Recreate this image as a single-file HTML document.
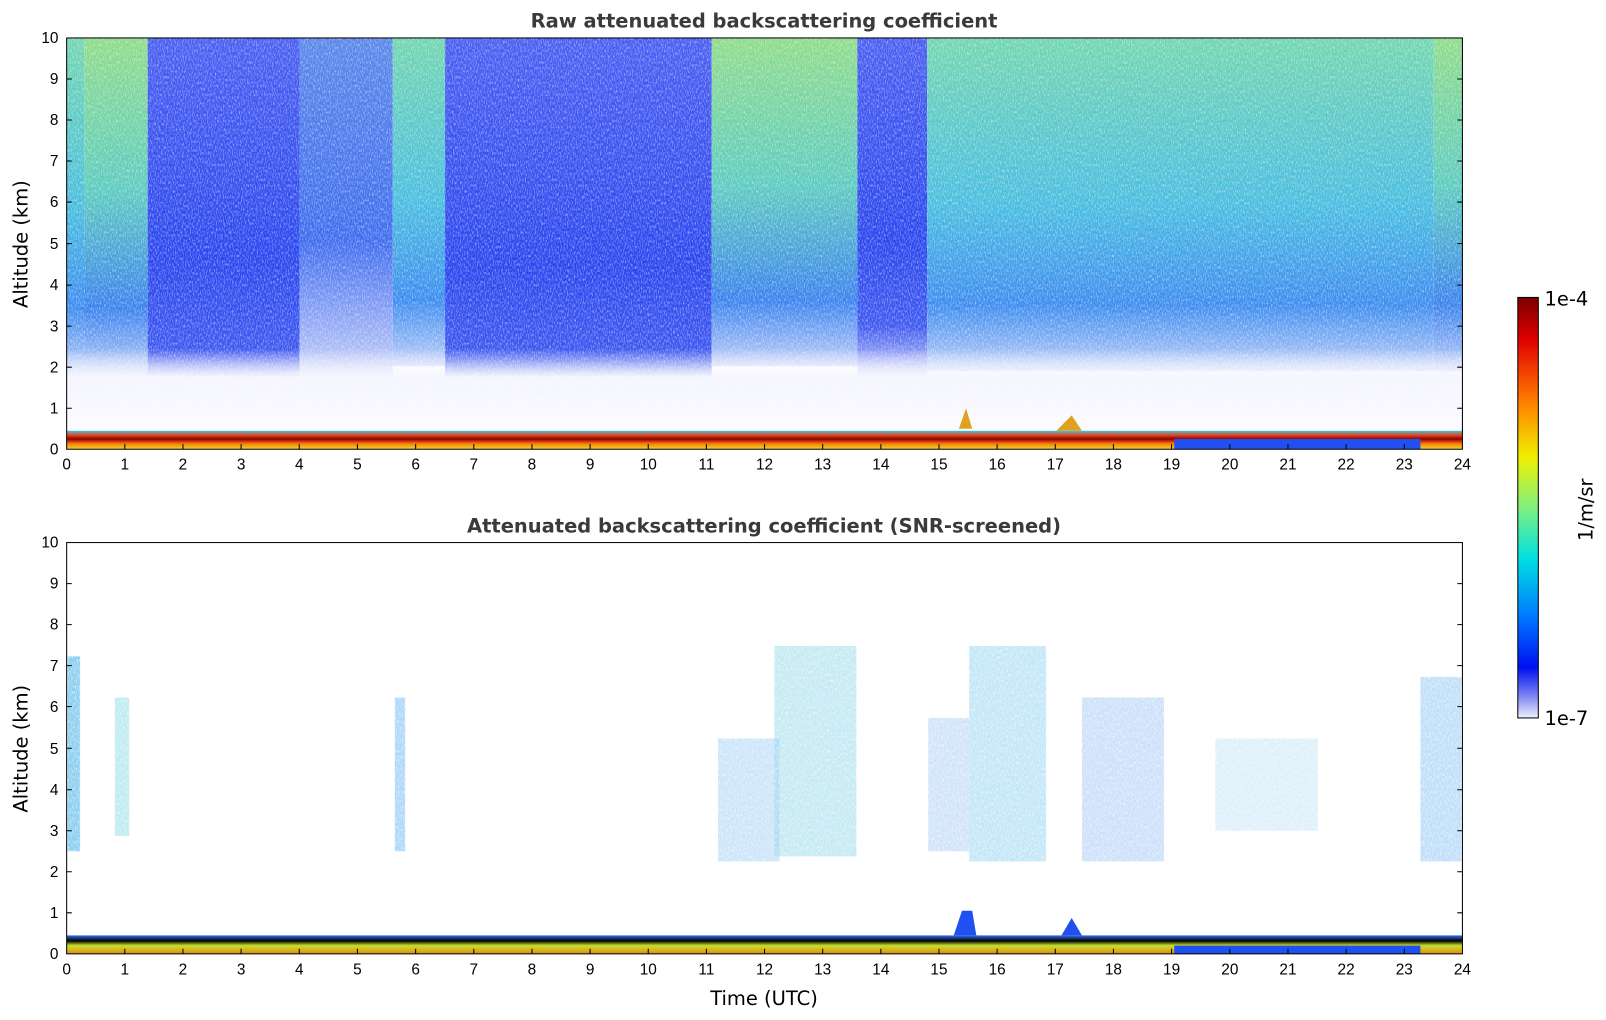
<!DOCTYPE html>
<html><head><meta charset="utf-8">
<style>
html,body{margin:0;padding:0;background:#fff;}
body{width:1606px;height:1020px;position:relative;overflow:hidden;font-family:"Liberation Sans","DejaVu Sans",sans-serif;}
</style></head>
<body>
<svg width="1606" height="1020" viewBox="0 0 1566 994.5" preserveAspectRatio="none" xmlns="http://www.w3.org/2000/svg" style="position:absolute;left:0;top:0">
<defs>
 <filter id="nz" x="0" y="0" width="100%" height="100%">
  <feTurbulence type="fractalNoise" baseFrequency="0.9 0.35" numOctaves="2" seed="3"/>
  <feColorMatrix type="matrix" values="0 0 0 0 1  0 0 0 0 1  0 0 0 0 1  0 0 0 -2.2 1.25"/>
 </filter>
 <linearGradient id="gBlue" x1="0" y1="0" x2="0" y2="1">
  <stop offset="0" stop-color="#4a5ff2"/><stop offset="0.6" stop-color="#2a46ee"/><stop offset="0.85" stop-color="#3e58f0"/><stop offset="1" stop-color="#c8cffa"/>
 </linearGradient>
 <linearGradient id="gCyan" x1="0" y1="0" x2="0" y2="1">
  <stop offset="0" stop-color="#72d6b0"/><stop offset="0.5" stop-color="#48bde0"/><stop offset="0.8" stop-color="#3c8cf0"/><stop offset="1" stop-color="#c0cef8"/>
 </linearGradient>
 <linearGradient id="gGreen" x1="0" y1="0" x2="0" y2="1">
  <stop offset="0" stop-color="#8fdc8a"/><stop offset="0.45" stop-color="#5ccbc0"/><stop offset="0.8" stop-color="#3a82ee"/><stop offset="1" stop-color="#c0cef8"/>
 </linearGradient>
 <linearGradient id="gMix" x1="0" y1="0" x2="0" y2="1">
  <stop offset="0" stop-color="#5a88ea"/><stop offset="0.6" stop-color="#3f6cee"/><stop offset="1" stop-color="#c8d0fa"/>
 </linearGradient>
 <linearGradient id="gLow" x1="0" y1="0" x2="0" y2="1">
  <stop offset="0" stop-color="#ffffff" stop-opacity="0"/><stop offset="0.35" stop-color="#f4f5fe"/><stop offset="1" stop-color="#fbfbff"/>
 </linearGradient>
 <linearGradient id="gBase" x1="0" y1="0" x2="0" y2="1">
  <stop offset="0" stop-color="#38c8e0"/><stop offset="0.25" stop-color="#e8401a"/><stop offset="0.45" stop-color="#8a0000"/><stop offset="0.7" stop-color="#ff7a10"/><stop offset="1" stop-color="#e8e020"/>
 </linearGradient>
 <linearGradient id="gBase2" x1="0" y1="0" x2="0" y2="1">
  <stop offset="0" stop-color="#3070f0"/><stop offset="0.3" stop-color="#000"/><stop offset="0.55" stop-color="#c8e030"/><stop offset="1" stop-color="#e09010"/>
 </linearGradient>
 <linearGradient id="cbar" x1="0" y1="0" x2="0" y2="1">
  <stop offset="0" stop-color="#7a0000"/><stop offset="0.1" stop-color="#e00000"/><stop offset="0.25" stop-color="#ff8000"/><stop offset="0.38" stop-color="#f0f000"/><stop offset="0.5" stop-color="#80f080"/><stop offset="0.62" stop-color="#00e0e0"/><stop offset="0.75" stop-color="#0080ff"/><stop offset="0.88" stop-color="#0010f0"/><stop offset="0.95" stop-color="#8088f0"/><stop offset="1" stop-color="#eef0ff"/>
 </linearGradient>
 <clipPath id="c1"><rect x="65" y="37" width="1361" height="401"/></clipPath>
 <clipPath id="c2"><rect x="65" y="529" width="1361" height="401"/></clipPath>
</defs>

<!-- TOP PLOT -->
<g clip-path="url(#c1)">
 <rect x="65" y="37" width="1361" height="401" fill="#fff"/>
 <g>
  <rect x="65" y="37" width="17" height="330" fill="url(#gCyan)"/>
  <rect x="82" y="37" width="62" height="330" fill="url(#gGreen)"/>
  <rect x="144" y="37" width="148" height="360" fill="url(#gBlue)"/>
  <rect x="292" y="37" width="91" height="330" fill="url(#gMix)"/>
  <rect x="383" y="37" width="51" height="320" fill="url(#gCyan)"/>
  <rect x="434" y="37" width="260" height="370" fill="url(#gBlue)"/>
  <rect x="694" y="37" width="142" height="320" fill="url(#gGreen)"/>
  <rect x="836" y="37" width="68" height="330" fill="url(#gBlue)"/>
  <rect x="904" y="37" width="494" height="325" fill="url(#gCyan)"/>
  <rect x="1398" y="37" width="28" height="325" fill="url(#gGreen)"/>
 </g>
 <rect x="65" y="340" width="1361" height="80" fill="url(#gLow)"/>
 <rect x="65" y="37" width="1361" height="401" filter="url(#nz)" opacity="0.55"/>
 <rect x="65" y="420" width="1361" height="18" fill="url(#gBase)"/>
 <rect x="1145" y="428" width="240" height="10" fill="#2050f0"/>
 <path d="M1030 420 L1045 405 L1055 420 Z M935 418 L942 398 L948 418Z" fill="#e0a020"/>
</g>
<rect x="65" y="37" width="1361" height="401" fill="none" stroke="#000" stroke-width="1"/>

<!-- BOTTOM PLOT -->
<g clip-path="url(#c2)">
 <g opacity="0.6">
  <rect x="66" y="640" width="12" height="190" fill="#40b0e8"/>
  <rect x="112" y="680" width="14" height="135" fill="#50c8d8" opacity="0.6"/>
  <rect x="385" y="680" width="10" height="150" fill="#40a0f0" opacity="0.7"/>
  <rect x="700" y="720" width="60" height="120" fill="#4aa0f0" opacity="0.45"/>
  <rect x="755" y="630" width="80" height="205" fill="#50c0e0" opacity="0.55"/>
  <rect x="905" y="700" width="40" height="130" fill="#4090f0" opacity="0.4"/>
  <rect x="945" y="630" width="75" height="210" fill="#48b8e8" opacity="0.55"/>
  <rect x="1055" y="680" width="80" height="160" fill="#4890f0" opacity="0.45"/>
  <rect x="1185" y="720" width="100" height="90" fill="#50b0e8" opacity="0.3"/>
  <rect x="1385" y="660" width="40" height="180" fill="#40a0f0" opacity="0.55"/>
 </g>
 <rect x="65" y="529" width="1361" height="401" fill="#fff" filter="url(#nz)" opacity="0.75"/>
 <rect x="65" y="912" width="1361" height="18" fill="url(#gBase2)"/>
 <path d="M930 912 L938 888 L948 888 L952 912 Z M1035 912 L1045 895 L1055 912Z" fill="#2050f0"/>
 <rect x="1145" y="922" width="240" height="8" fill="#2050f0"/>
</g>
<rect x="65" y="529" width="1361" height="401" fill="none" stroke="#000" stroke-width="1"/>

<!-- Colorbar -->
<rect x="1480" y="290" width="20" height="410" fill="url(#cbar)" stroke="#000" stroke-width="1"/>

<g font-family="Liberation Sans, DejaVu Sans, sans-serif" font-size="15" text-anchor="middle">
 <text x="65" y="458">0</text><text x="121.7" y="458">1</text><text x="178.4" y="458">2</text><text x="235.1" y="458">3</text><text x="291.8" y="458">4</text><text x="348.5" y="458">5</text><text x="405.3" y="458">6</text><text x="462" y="458">7</text><text x="518.7" y="458">8</text><text x="575.4" y="458">9</text><text x="632.1" y="458">10</text><text x="688.8" y="458">11</text><text x="745.5" y="458">12</text><text x="802.2" y="458">13</text><text x="858.9" y="458">14</text><text x="915.6" y="458">15</text><text x="972.3" y="458">16</text><text x="1029" y="458">17</text><text x="1085.7" y="458">18</text><text x="1142.4" y="458">19</text><text x="1199.2" y="458">20</text><text x="1255.9" y="458">21</text><text x="1312.6" y="458">22</text><text x="1369.3" y="458">23</text><text x="1426" y="458">24</text>
 <text x="65" y="950">0</text><text x="121.7" y="950">1</text><text x="178.4" y="950">2</text><text x="235.1" y="950">3</text><text x="291.8" y="950">4</text><text x="348.5" y="950">5</text><text x="405.3" y="950">6</text><text x="462" y="950">7</text><text x="518.7" y="950">8</text><text x="575.4" y="950">9</text><text x="632.1" y="950">10</text><text x="688.8" y="950">11</text><text x="745.5" y="950">12</text><text x="802.2" y="950">13</text><text x="858.9" y="950">14</text><text x="915.6" y="950">15</text><text x="972.3" y="950">16</text><text x="1029" y="950">17</text><text x="1085.7" y="950">18</text><text x="1142.4" y="950">19</text><text x="1199.2" y="950">20</text><text x="1255.9" y="950">21</text><text x="1312.6" y="950">22</text><text x="1369.3" y="950">23</text><text x="1426" y="950">24</text>
</g>
<g font-family="Liberation Sans, DejaVu Sans, sans-serif" font-size="15" text-anchor="end">
 <text x="57" y="443">0</text><text x="57" y="403">1</text><text x="57" y="363">2</text><text x="57" y="323">3</text><text x="57" y="283">4</text><text x="57" y="243">5</text><text x="57" y="202">6</text><text x="57" y="162">7</text><text x="57" y="122">8</text><text x="57" y="82">9</text><text x="57" y="42">10</text>
 <text x="57" y="935">0</text><text x="57" y="895">1</text><text x="57" y="855">2</text><text x="57" y="815">3</text><text x="57" y="775">4</text><text x="57" y="735">5</text><text x="57" y="694">6</text><text x="57" y="654">7</text><text x="57" y="614">8</text><text x="57" y="574">9</text><text x="57" y="534">10</text>
</g>
<g stroke="#000" stroke-width="1">
 <path d="M121.7 438v-5M178.4 438v-5M235.1 438v-5M291.8 438v-5M348.5 438v-5M405.3 438v-5M462 438v-5M518.7 438v-5M575.4 438v-5M632.1 438v-5M688.8 438v-5M745.5 438v-5M802.2 438v-5M858.9 438v-5M915.6 438v-5M972.3 438v-5M1029 438v-5M1085.7 438v-5M1142.4 438v-5M1199.2 438v-5M1255.9 438v-5M1312.6 438v-5M1369.3 438v-5"/>
 <path d="M121.7 930v-5M178.4 930v-5M235.1 930v-5M291.8 930v-5M348.5 930v-5M405.3 930v-5M462 930v-5M518.7 930v-5M575.4 930v-5M632.1 930v-5M688.8 930v-5M745.5 930v-5M802.2 930v-5M858.9 930v-5M915.6 930v-5M972.3 930v-5M1029 930v-5M1085.7 930v-5M1142.4 930v-5M1199.2 930v-5M1255.9 930v-5M1312.6 930v-5M1369.3 930v-5"/>
 <path d="M65 398h5M65 358h5M65 318h5M65 278h5M65 237.5h5M65 197h5M65 157h5M65 117h5M65 77h5 M1426 398h-5M1426 358h-5M1426 318h-5M1426 278h-5M1426 237.5h-5M1426 197h-5M1426 157h-5M1426 117h-5M1426 77h-5"/>
 <path d="M65 890h5M65 850h5M65 810h5M65 770h5M65 729.5h5M65 689h5M65 649h5M65 609h5M65 569h5 M1426 890h-5M1426 850h-5M1426 810h-5M1426 770h-5M1426 729.5h-5M1426 689h-5M1426 649h-5M1426 609h-5M1426 569h-5"/>
</g>

<g font-family="DejaVu Sans, Liberation Sans, sans-serif" font-weight="bold" font-size="19" fill="#3a3a3a" text-anchor="middle">
 <text x="745" y="27">Raw attenuated backscattering coefficient</text>
 <text x="745" y="519">Attenuated backscattering coefficient (SNR-screened)</text>
</g>
<g font-family="DejaVu Sans, Liberation Sans, sans-serif" font-size="19" fill="#000" text-anchor="middle">
 <text transform="translate(27 238) rotate(-90)">Altitude (km)</text>
 <text transform="translate(27 730) rotate(-90)">Altitude (km)</text>
 <text x="745" y="980">Time (UTC)</text>
 <text transform="translate(1553 497) rotate(-90)">1/m/sr</text>
</g>
<g font-family="DejaVu Sans, Liberation Sans, sans-serif" font-size="19" fill="#000">
 <text x="1506" y="298">1e-4</text>
 <text x="1506" y="707">1e-7</text>
</g>
</svg>
</body></html>
